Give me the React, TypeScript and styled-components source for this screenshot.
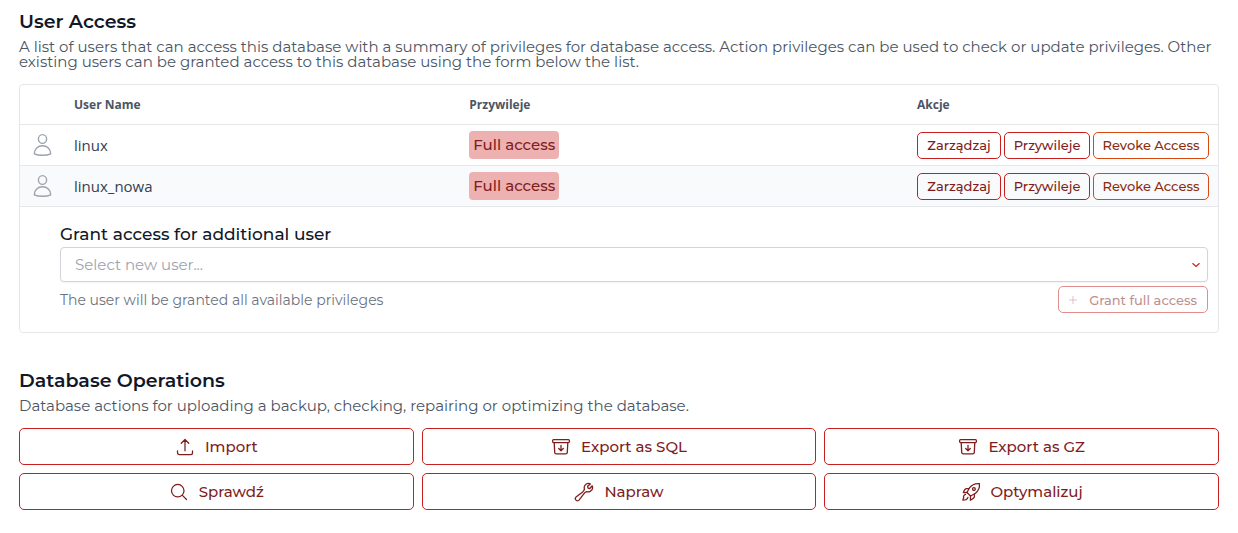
import React from "react";
import styled, { createGlobalStyle } from "styled-components";
import { HiOutlineArrowUpTray, HiOutlineMagnifyingGlass } from "react-icons/hi2";

const brandFont = `Montserrat, Inter, "Liberation Sans", sans-serif`;
const dataFont = `"Open Sans", "Noto Sans", sans-serif`;

const GlobalStyle = createGlobalStyle`
  *, *::before, *::after { box-sizing: border-box; }
  body { margin: 0; background: #fff; font-family: ${brandFont}; color: #111827; }
  h2, p { margin: 0; }
`;

const Page = styled.main`
  display: flex;
  flex-direction: column;
  gap: 36px;
  padding: 10px 19px 20px;
`;

const Section = styled.section`
  display: flex;
  flex-direction: column;
`;

const Title = styled.h2`
  font-size: 19px;
  line-height: 24px;
  font-weight: 600;
`;

const Description = styled.p`
  margin: 5px 0 15px;
  font-size: 15px;
  line-height: 15px;
  color: #4b5563;
`;

const Card = styled.div`
  border: 1px solid #e5e7eb;
  border-radius: 4px;
  overflow: hidden;
`;

const Table = styled.table`
  width: 100%;
  table-layout: fixed;
  border-collapse: separate;
  border-spacing: 0;
  font-family: ${dataFont};
`;

const HeadCell = styled.th<{ $width?: string }>`
  width: ${(p) => p.$width ?? "auto"};
  height: 40px;
  padding: 0 10px;
  border-bottom: 1px solid #e5e7eb;
  text-align: left;
  font-size: 12px;
  line-height: 16px;
  font-weight: 700;
  color: #4b5563;
`;

const Row = styled.tr`
  &:nth-child(even) { background: #f9fafb; }
`;

const Cell = styled.td`
  height: 41px;
  padding: 0 10px;
  border-bottom: 1px solid #e5e7eb;
  font-size: 15px;
  line-height: 20px;
  color: #374151;
`;

const AvatarSvg = styled.svg`
  display: block;
  width: 24px;
  height: 24px;
  color: #9ca3af;
`;

const Badge = styled.span`
  display: block;
  width: fit-content;
  padding: 4px;
  border-radius: 4px;
  background: #eeb1b1;
  color: #7f1d1d;
  font-family: ${brandFont};
  font-size: 15px;
  line-height: 20px;
  font-weight: 500;
`;

const Actions = styled.div`
  display: grid;
  grid-template-columns: 84px 86px 116px;
  gap: 3px;
`;

const SmallButton = styled.button<{ $tone?: "danger" | "warning" }>`
  display: flex;
  align-items: center;
  justify-content: center;
  gap: 12px;
  height: 27px;
  padding: 0 10px;
  border: 1px solid ${(p) => (p.$tone === "warning" ? "#d9480f" : "#c81e1e")};
  border-radius: 5px;
  background: transparent;
  color: ${(p) => (p.$tone === "warning" ? "#8a2c0d" : "#7f1d1d")};
  font-family: ${brandFont};
  font-size: 13px;
  font-weight: 500;
  white-space: nowrap;
  &:disabled { opacity: 0.5; }
`;

const GrantForm = styled.form`
  display: flex;
  flex-direction: column;
  padding: 15px 10px 19px 40px;
`;

const GrantLabel = styled.label`
  font-size: 17px;
  line-height: 25px;
  font-weight: 500;
`;

const SelectWrap = styled.div`
  position: relative;
  display: flex;
`;

const Select = styled.select`
  appearance: none;
  width: 100%;
  height: 35px;
  padding: 0 14px;
  border: 1px solid #d1d5db;
  border-radius: 4px;
  background: #fff;
  color: #9ca3af;
  font-family: ${brandFont};
  font-size: 15px;
  box-shadow: 0 1px 2px rgba(0, 0, 0, 0.05);
`;

const Caret = styled.svg`
  position: absolute;
  top: 14px;
  right: 8px;
  width: 8px;
  height: 8px;
  pointer-events: none;
`;

const GrantFooter = styled.div`
  display: flex;
  align-items: center;
  justify-content: space-between;
  margin-top: 4px;
`;

const Hint = styled.p`
  font-size: 14px;
  line-height: 20px;
  color: #6b7280;
`;

const Operations = styled.div`
  display: grid;
  grid-template-columns: repeat(3, 1fr);
  gap: 8px;
`;

const OperationButton = styled.button`
  display: flex;
  align-items: center;
  justify-content: center;
  gap: 10px;
  height: 37px;
  border: 1px solid #c81e1e;
  border-radius: 5px;
  background: #fff;
  color: #7f1d1d;
  font-family: ${brandFont};
  font-size: 15px;
  font-weight: 500;
  svg { width: 20px; height: 20px; }
`;

const Avatar = () => (
  <AvatarSvg viewBox="0 0 24 24" fill="none" stroke="currentColor" strokeWidth="1.4" strokeLinejoin="round" aria-hidden="true">
    <ellipse cx="12.5" cy="6" rx="4.1" ry="4.4" />
    <path d="M4.3 20.8c0-4.8 3.6-8 8.2-8s8.2 3.2 8.2 8c-2 1-4.8 1.5-8.2 1.5s-6.2-.5-8.2-1.5z" />
  </AvatarSvg>
);

const LineIcon = ({ children }: { children: React.ReactNode }) => (
  <svg
    viewBox="0 0 20 20"
    fill="none"
    stroke="currentColor"
    strokeWidth="1.3"
    strokeLinecap="round"
    strokeLinejoin="round"
    aria-hidden="true"
  >
    {children}
  </svg>
);

const DownloadBox = () => (
  <LineIcon>
    <rect x="1.6" y="2.6" width="16.8" height="3" rx="1" />
    <path d="M3.2 5.6l.5 9.8a1.6 1.6 0 0 0 1.6 1.5h9.4a1.6 1.6 0 0 0 1.6-1.5l.5-9.8M10 8.4v5.2M7.7 11.5l2.3 2.2 2.3-2.2" />
  </LineIcon>
);

const Wrench = () => (
  <LineIcon>
    <path d="M14 6.2l-.4-2 2.7-2.3c-2-.9-4.5-.2-5.6 1.9-.6 1.2-.6 2.4-.2 3.5-.3 1-1 1.8-1.8 2.6L2 15.1a2.1 2.1 0 0 0 3 3l5.2-6.8c.8-.9 1.5-1.4 2.5-1.7 1.2.4 2.4.3 3.5-.2 2-1.1 2.8-3.5 2-5.6l-2.4 2.7z" />
  </LineIcon>
);

const Rocket = () => (
  <LineIcon>
    <path d="M18.4 1.6c-4-.4-7.4.9-9.9 4.2L6 10.5 9.5 14l4.7-2.5c3.3-2.5 4.6-5.9 4.2-9.9z" />
    <circle cx="12.9" cy="7.1" r="1.4" />
    <path d="M8 6.6H5.6c-1.5 0-2.6 2-3.2 4l3.6-.1M13.4 12v2.4c0 1.5-2 2.6-4 3.8l.1-4.2" />
    <path d="M4.6 12.4c-1.7.5-2.6 2-1.8 3.6-.6.4-.9 1.2-.9 2.2 2.500 0 4.400-.6 5-2.800" />
  </LineIcon>
);

const users = ["linux", "linux_nowa"];

const operations = [
  { label: "Import", icon: <HiOutlineArrowUpTray /> },
  { label: "Export as SQL", icon: <DownloadBox /> },
  { label: "Export as GZ", icon: <DownloadBox /> },
  { label: "Sprawdź", icon: <HiOutlineMagnifyingGlass /> },
  { label: "Napraw", icon: <Wrench /> },
  { label: "Optymalizuj", icon: <Rocket /> },
];

export default function App() {
  return (
    <>
      <GlobalStyle />
      <Page>
        <Section>
          <Title>User Access</Title>
          <Description>
            A list of users that can access this database with a summary of privileges for database access. Action
            privileges can be used to check or update privileges. Other existing users can be granted access to this
            database using the form below the list.
          </Description>
          <Card>
            <Table>
              <thead>
                <tr>
                  <HeadCell $width="44px" />
                  <HeadCell $width="33%">User Name</HeadCell>
                  <HeadCell>Przywileje</HeadCell>
                  <HeadCell $width="311px">Akcje</HeadCell>
                </tr>
              </thead>
              <tbody>
                {users.map((name) => (
                  <Row key={name}>
                    <Cell><Avatar /></Cell>
                    <Cell>{name}</Cell>
                    <Cell><Badge>Full access</Badge></Cell>
                    <Cell>
                      <Actions>
                        <SmallButton type="button">Zarządzaj</SmallButton>
                        <SmallButton type="button">Przywileje</SmallButton>
                        <SmallButton type="button" $tone="warning">Revoke Access</SmallButton>
                      </Actions>
                    </Cell>
                  </Row>
                ))}
              </tbody>
            </Table>
            <GrantForm>
              <GrantLabel htmlFor="new-user">Grant access for additional user</GrantLabel>
              <SelectWrap>
                <Select id="new-user" defaultValue="">
                  <option value="">Select new user...</option>
                </Select>
                <Caret viewBox="0 0 8 8" fill="none" stroke="#c81e1e" strokeWidth="1.2" aria-hidden="true">
                  <path d="M.5 2.200L4 5.400l3.500-3.200" />
                </Caret>
              </SelectWrap>
              <GrantFooter>
                <Hint>The user will be granted all available privileges</Hint>
                <SmallButton type="submit" disabled>
                  <svg width="8" height="8" viewBox="0 0 8 8" stroke="currentColor" strokeOpacity="0.5" aria-hidden="true">
                    <path d="M4 0v8M0 4h8" />
                  </svg>
                  Grant full access
                </SmallButton>
              </GrantFooter>
            </GrantForm>
          </Card>
        </Section>
        <Section>
          <Title>Database Operations</Title>
          <Description>
            Database actions for uploading a backup, checking, repairing or optimizing the database.
          </Description>
          <Operations>
            {operations.map(({ label, icon }) => (
              <OperationButton key={label} type="button">
                {icon}
                {label}
              </OperationButton>
            ))}
          </Operations>
        </Section>
      </Page>
    </>
  );
}
